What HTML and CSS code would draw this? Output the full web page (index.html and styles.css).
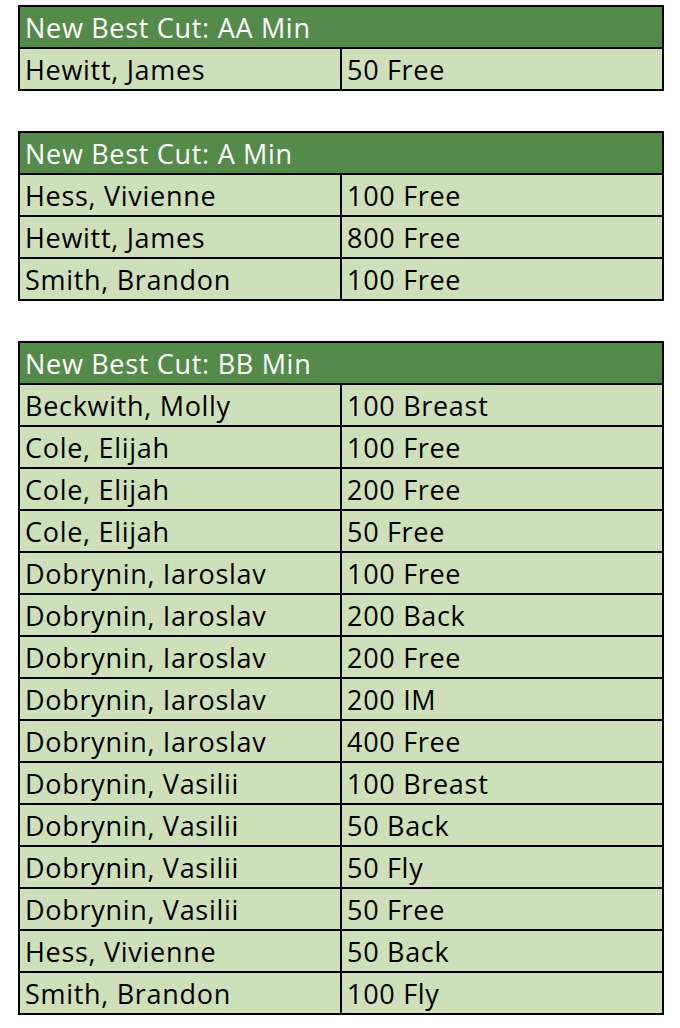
FILE: index.html
```html
<!DOCTYPE html>
<html>
<head>
<meta charset="utf-8">
<link rel="stylesheet" href="styles.css">
</head>
<body>
<div class="page">
  <table class="cuts">
    <tr><th colspan="2">New Best Cut: AA Min</th></tr>
    <tr><td class="name">Hewitt, James</td><td>50 Free</td></tr>
  </table>
  <table class="cuts">
    <tr><th colspan="2">New Best Cut: A Min</th></tr>
    <tr><td class="name">Hess, Vivienne</td><td>100 Free</td></tr>
    <tr><td class="name">Hewitt, James</td><td>800 Free</td></tr>
    <tr><td class="name">Smith, Brandon</td><td>100 Free</td></tr>
  </table>
  <table class="cuts">
    <tr><th colspan="2">New Best Cut: BB Min</th></tr>
    <tr><td class="name">Beckwith, Molly</td><td>100 Breast</td></tr>
    <tr><td class="name">Cole, Elijah</td><td>100 Free</td></tr>
    <tr><td class="name">Cole, Elijah</td><td>200 Free</td></tr>
    <tr><td class="name">Cole, Elijah</td><td>50 Free</td></tr>
    <tr><td class="name">Dobrynin, Iaroslav</td><td>100 Free</td></tr>
    <tr><td class="name">Dobrynin, Iaroslav</td><td>200 Back</td></tr>
    <tr><td class="name">Dobrynin, Iaroslav</td><td>200 Free</td></tr>
    <tr><td class="name">Dobrynin, Iaroslav</td><td>200 IM</td></tr>
    <tr><td class="name">Dobrynin, Iaroslav</td><td>400 Free</td></tr>
    <tr><td class="name">Dobrynin, Vasilii</td><td>100 Breast</td></tr>
    <tr><td class="name">Dobrynin, Vasilii</td><td>50 Back</td></tr>
    <tr><td class="name">Dobrynin, Vasilii</td><td>50 Fly</td></tr>
    <tr><td class="name">Dobrynin, Vasilii</td><td>50 Free</td></tr>
    <tr><td class="name">Hess, Vivienne</td><td>50 Back</td></tr>
    <tr><td class="name">Smith, Brandon</td><td>100 Fly</td></tr>
  </table>
</div>
</body>
</html>
```

FILE: styles.css
```css
html, body {
  margin: 0;
  padding: 0;
  background: #ffffff;
}

.page {
  padding: 5px 0 0 18px;
  display: flex;
  flex-direction: column;
  gap: 40px;
  align-items: flex-start;
}

.cuts {
  border-collapse: collapse;
  width: 646px;
  table-layout: fixed;
  font-family: "Open Sans", Lato, sans-serif;
  font-size: 27px;
  letter-spacing: 0.7px;
  color: #000;
}

.cuts th,
.cuts td {
  border: 2px solid #000;
  height: 40px;
  padding: 1px 0 0 5px;
  text-align: left;
  font-weight: normal;
  white-space: nowrap;
  vertical-align: middle;
  line-height: 39px;
  box-sizing: border-box;
}

.cuts th {
  background: #558b4a;
  color: #ffffff;
}

.cuts td {
  background: #cde0b9;
}

.cuts td.name {
  width: 323px;
}
```
